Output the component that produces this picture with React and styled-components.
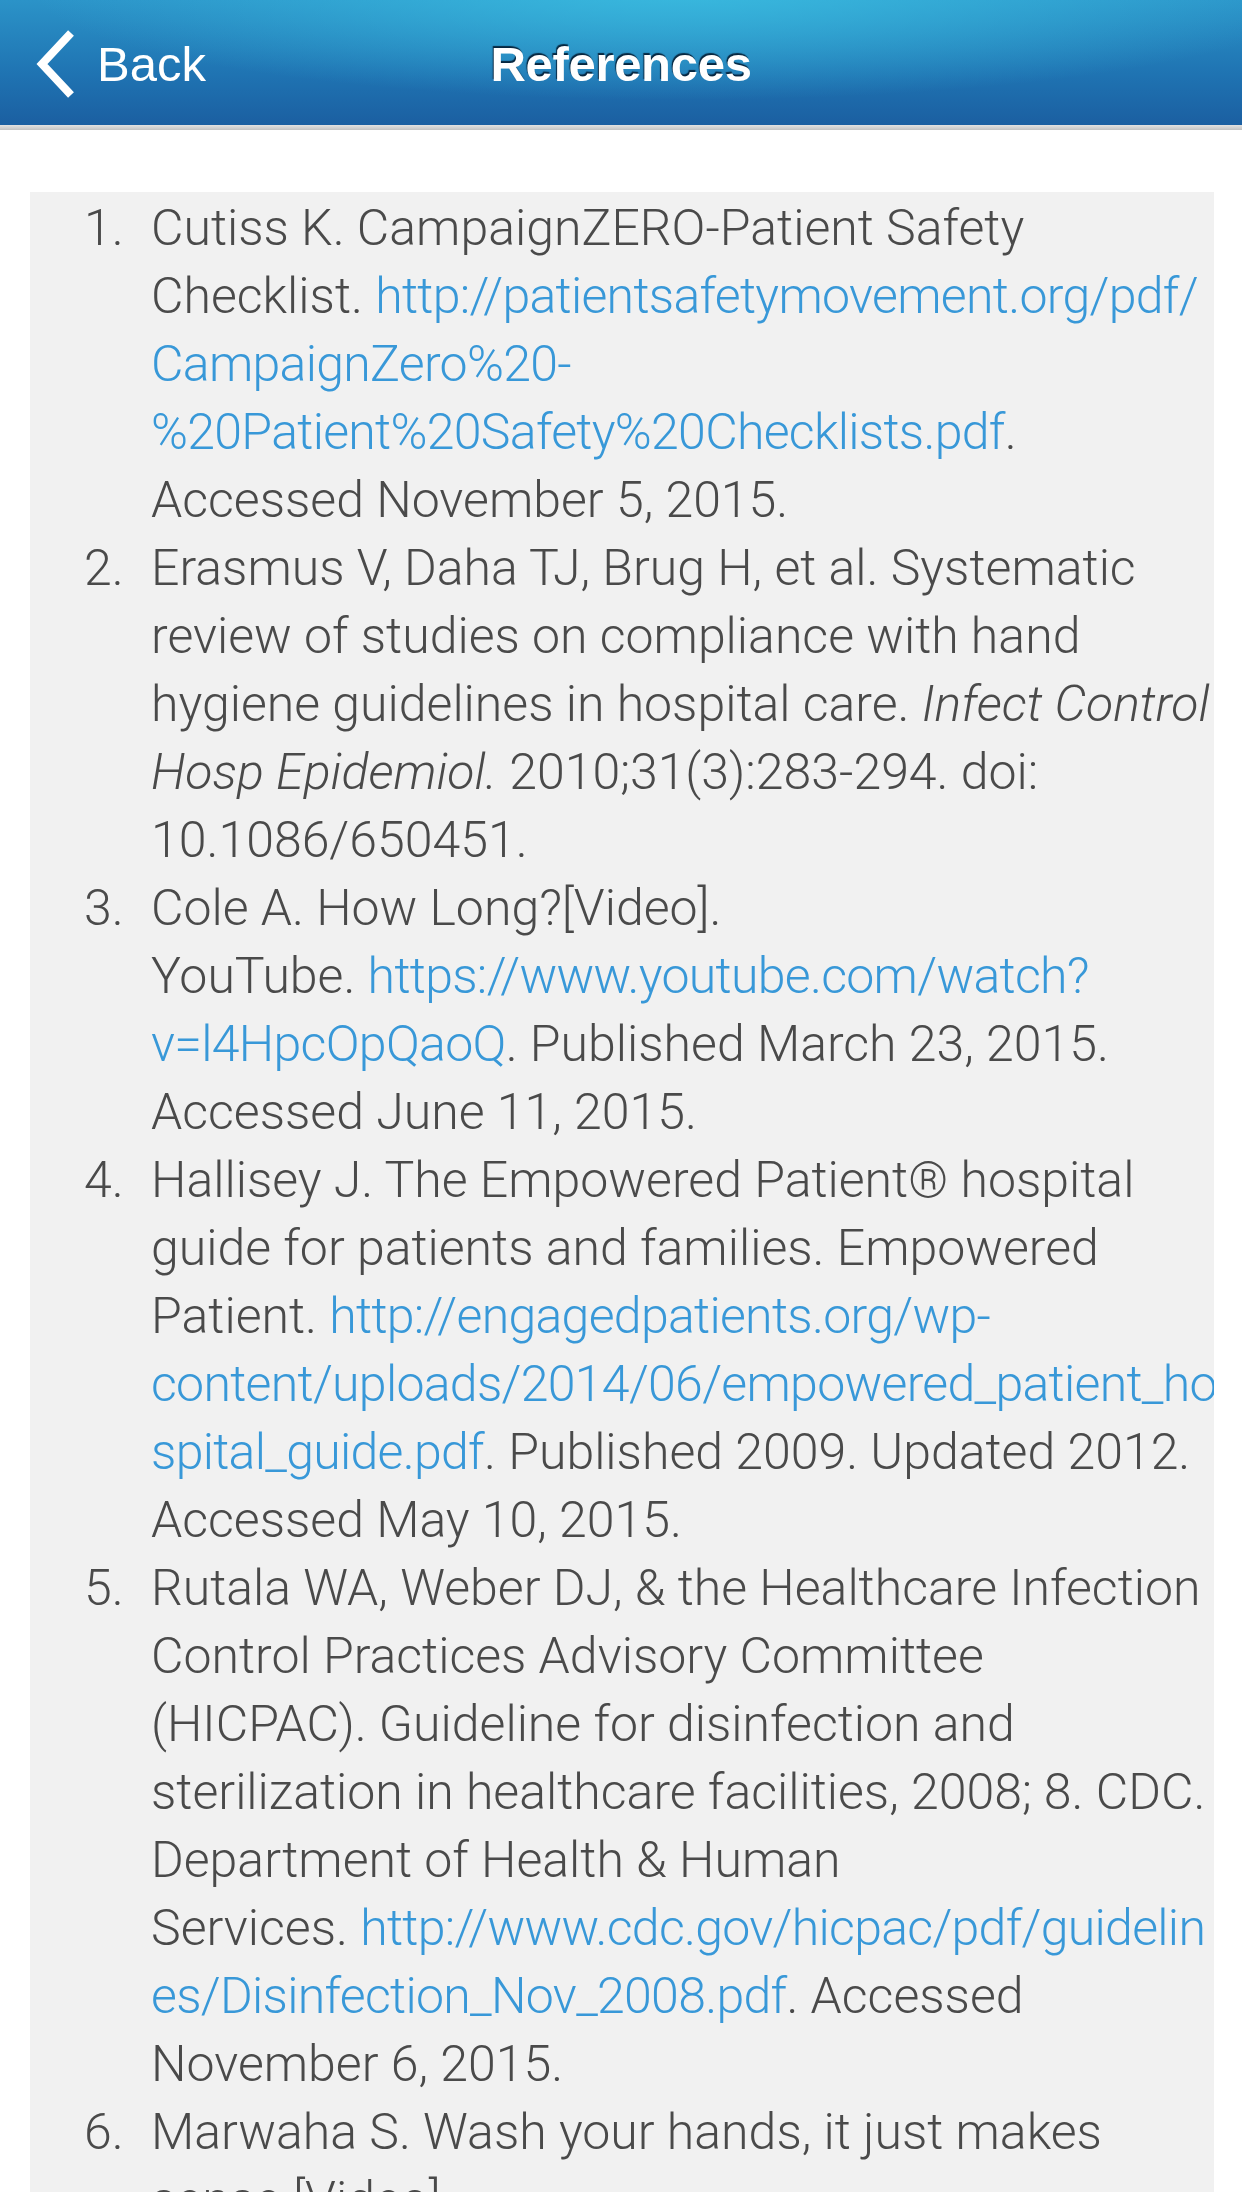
import React from "react";
import styled, { createGlobalStyle } from "styled-components";

const Global = createGlobalStyle`
  html, body { margin: 0; padding: 0; background: #ffffff; }
  body { width: 1242px; height: 2208px; overflow: hidden; }
`;

const Page = styled.div`
  width: 1242px;
  height: 2208px;
  display: flex;
  flex-direction: column;
  background: #fff;
`;

const NavBar = styled.header`
  height: 125px;
  display: grid;
  grid-template-columns: 1fr auto 1fr;
  align-items: center;
  background:
    radial-gradient(ellipse 70% 120% at 55% -10%, rgba(58, 188, 224, 0.95) 0%, rgba(58, 188, 224, 0) 75%),
    linear-gradient(180deg, #2b93c8 0%, #1f73b2 60%, #1b5fa1 100%);
`;

const NavRule = styled.div`
  height: 5px;
  background: linear-gradient(180deg, #e2e2e2 0%, #c3c3c3 100%);
`;

const BackButton = styled.div`
  display: flex;
  align-items: center;
  gap: 20px;
  padding-left: 35px;
  color: #ffffff;
  font-family: "Liberation Sans", Arial, sans-serif;
  font-size: 49px;
  height: 100%;
  padding-top: 2px;
`;

const Title = styled.h1`
  margin: 0;
  color: #ffffff;
  font-family: "Liberation Sans", Arial, sans-serif;
  font-weight: 700;
  font-size: 49px;
  letter-spacing: -0.3px;
  text-shadow: -1px -2px 1px rgba(0, 20, 40, 0.85);
  padding-top: 2px;
`;

const Content = styled.main`
  flex: 1;
  padding: 62px 28px 16px 30px;
  display: flex;
  min-height: 0;
`;

const Panel = styled.ol`
  flex: 1;
  margin: 0;
  padding: 2px 0 0 0;
  list-style: none;
  background: #f1f1f1;
  overflow: hidden;
  font-family: "Roboto", "Helvetica Neue", sans-serif;
  font-weight: 300;
  font-size: 50px;
  line-height: 68px;
  letter-spacing: 0;
  color: #4a4a4a;
`;

const Item = styled.li`
  display: flex;
`;

const Num = styled.span`
  flex: 0 0 auto;
  width: 67px;
  padding-left: 54px;
`;

const Body = styled.div`
  flex: 1;
  min-width: 0;
`;

const Line = styled.span`
  display: block;
  white-space: nowrap;
`;

const Link = styled.span`
  color: #3898d8;
  letter-spacing: -0.7px;
`;

const Em = styled.em`
  font-style: italic;
`;

const refs = [
  [
    [["Cutiss K. CampaignZERO-Patient Safety"]],
    [["Checklist. "], ["http://patientsafetymovement.org/pdf/", "link"]],
    [["CampaignZero%20-", "link"]],
    [["%20Patient%20Safety%20Checklists.pdf", "link"], ["."]],
    [["Accessed November 5, 2015."]],
  ],
  [
    [["Erasmus V, Daha TJ, Brug H, et al. Systematic"]],
    [["review of studies on compliance with hand"]],
    [["hygiene guidelines in hospital care. "], ["Infect Control", "em"]],
    [["Hosp Epidemiol.", "em"], [" 2010;31(3):283-294. doi:"]],
    [["10.1086/650451."]],
  ],
  [
    [["Cole A. How Long?[Video]."]],
    [["YouTube. "], ["https://www.youtube.com/watch?", "link"]],
    [["v=l4HpcOpQaoQ", "link"], [". Published March 23, 2015."]],
    [["Accessed June 11, 2015."]],
  ],
  [
    [["Hallisey J. The Empowered Patient® hospital"]],
    [["guide for patients and families. Empowered"]],
    [["Patient. "], ["http://engagedpatients.org/wp-", "link"]],
    [["content/uploads/2014/06/empowered_patient_ho", "link"]],
    [["spital_guide.pdf", "link"], [". Published 2009. Updated 2012."]],
    [["Accessed May 10, 2015."]],
  ],
  [
    [["Rutala WA, Weber DJ, & the Healthcare Infection"]],
    [["Control Practices Advisory Committee"]],
    [["(HICPAC). Guideline for disinfection and"]],
    [["sterilization in healthcare facilities, 2008; 8. CDC."]],
    [["Department of Health & Human"]],
    [["Services. "], ["http://www.cdc.gov/hicpac/pdf/guidelin", "link"]],
    [["es/Disinfection_Nov_2008.pdf", "link"], [". Accessed"]],
    [["November 6, 2015."]],
  ],
  [
    [["Marwaha S. Wash your hands, it just makes"]],
    [["sense [Video]."]],
    [["Accessed November 6, 2015."]],
  ],
];

function Segment({ text, kind }) {
  if (kind === "link") return <Link>{text}</Link>;
  if (kind === "em") return <Em>{text}</Em>;
  return <>{text}</>;
}

function Chevron() {
  return (
    <svg width="42" height="68" viewBox="0 0 42 68" aria-hidden="true">
      <polyline
        points="36,3 7,34 36,65"
        fill="none"
        stroke="#ffffff"
        strokeWidth="8"
        strokeLinecap="butt"
        strokeLinejoin="miter"
      />
    </svg>
  );
}

export default function App() {
  return (
    <Page>
      <Global />
      <NavBar>
        <BackButton>
          <Chevron />
          <span>Back</span>
        </BackButton>
        <Title>References</Title>
        <div />
      </NavBar>
      <NavRule />
      <Content>
        <Panel>
          {refs.map((lines, i) => (
            <Item key={i}>
              <Num>{i + 1}.</Num>
              <Body>
                {lines.map((segs, j) => (
                  <Line key={j}>
                    {segs.map(([t, k], n) => (
                      <Segment key={n} text={t} kind={k} />
                    ))}
                  </Line>
                ))}
              </Body>
            </Item>
          ))}
        </Panel>
      </Content>
    </Page>
  );
}
